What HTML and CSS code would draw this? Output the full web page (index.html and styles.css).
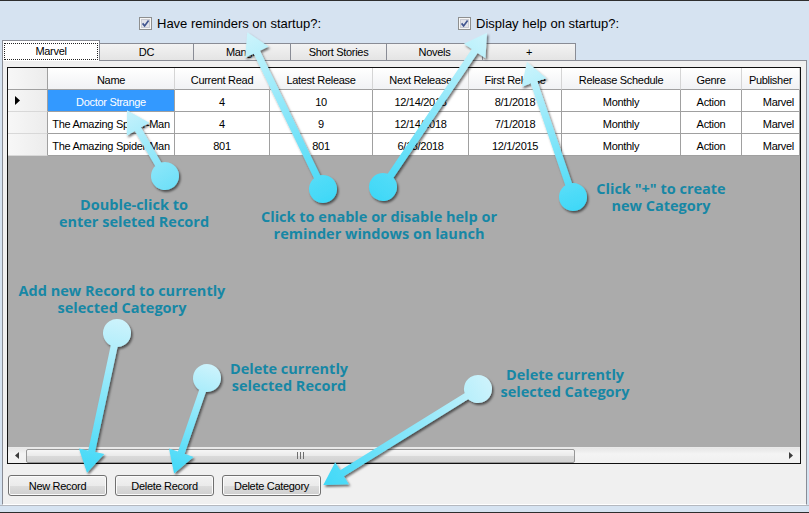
FILE: index.html
```html
<!DOCTYPE html>
<html>
<head>
<meta charset="utf-8">
<link rel="stylesheet" href="styles.css">
</head>
<body>
<div class="window">
  <div class="options">
    <label class="opt">
      <svg class="cb" width="13" height="13" viewBox="0 0 13 13"><rect x="0.5" y="0.5" width="12" height="12" fill="#f6f6f6" stroke="#8e8f8f"/><rect x="2.5" y="2.5" width="8" height="8" fill="#e2e3ea" stroke="#c9cbd3"/><path d="M3.6 6.4 L5.6 8.9 L9.6 3.6" fill="none" stroke="#41558f" stroke-width="1.7"/></svg>
      <span>Have reminders on startup?:</span>
    </label>
    <label class="opt">
      <svg class="cb" width="13" height="13" viewBox="0 0 13 13"><rect x="0.5" y="0.5" width="12" height="12" fill="#f6f6f6" stroke="#8e8f8f"/><rect x="2.5" y="2.5" width="8" height="8" fill="#e2e3ea" stroke="#c9cbd3"/><path d="M3.6 6.4 L5.6 8.9 L9.6 3.6" fill="none" stroke="#41558f" stroke-width="1.7"/></svg>
      <span>Display help on startup?:</span>
    </label>
  </div>
  <div class="tabs">
    <div class="tab sel t-marvel"><span class="focus">Marvel</span></div>
    <div class="tab t-dc">DC</div>
    <div class="tab t-manga">Manga</div>
    <div class="tab t-ss">Short Stories</div>
    <div class="tab t-novels">Novels</div>
    <div class="tab t-plus">+</div>
  </div>
  <div class="panel">
    <div class="grid">
      <div class="row head">
        <div class="c rh"></div>
        <div class="c">Name</div>
        <div class="c">Current Read</div>
        <div class="c">Latest Release</div>
        <div class="c">Next Release</div>
        <div class="c">First Release</div>
        <div class="c">Release Schedule</div>
        <div class="c">Genre</div>
        <div class="c">Publisher</div>
      </div>
      <div class="row">
        <div class="c rh"><svg class="cur" width="5" height="9" viewBox="0 0 5 9"><path d="M0 0 L5 4.5 L0 9 Z" fill="#000"/></svg></div>
        <div class="c selcell">Doctor Strange</div>
        <div class="c">4</div>
        <div class="c">10</div>
        <div class="c">12/14/2018</div>
        <div class="c">8/1/2018</div>
        <div class="c">Monthly</div>
        <div class="c">Action</div>
        <div class="c pub">Marvel</div>
      </div>
      <div class="row">
        <div class="c rh"></div>
        <div class="c">The Amazing Spider-Man</div>
        <div class="c">4</div>
        <div class="c">9</div>
        <div class="c">12/14/2018</div>
        <div class="c">7/1/2018</div>
        <div class="c">Monthly</div>
        <div class="c">Action</div>
        <div class="c pub">Marvel</div>
      </div>
      <div class="row">
        <div class="c rh"></div>
        <div class="c">The Amazing Spider-Man</div>
        <div class="c">801</div>
        <div class="c">801</div>
        <div class="c">6/13/2018</div>
        <div class="c">12/1/2015</div>
        <div class="c">Monthly</div>
        <div class="c">Action</div>
        <div class="c pub">Marvel</div>
      </div>
      <div class="empty"></div>
      <div class="hscroll">
        <div class="sb-btn"><svg width="4" height="7" viewBox="0 0 4 7"><path d="M4 0 L0 3.5 L4 7 Z" fill="#3c3c3c"/></svg></div>
        <div class="sb-track">
          <div class="thumb"><svg width="7" height="7" viewBox="0 0 7 7"><path d="M0.5 0 V7 M3.5 0 V7 M6.5 0 V7" stroke="#6f6f6f" stroke-width="1"/></svg></div>
        </div>
        <div class="sb-btn"><svg width="4" height="7" viewBox="0 0 4 7"><path d="M0 0 L4 3.5 L0 7 Z" fill="#3c3c3c"/></svg></div>
      </div>
    </div>
    <div class="buttons">
      <div class="btn">New Record</div>
      <div class="btn">Delete Record</div>
      <div class="btn">Delete Category</div>
    </div>
  </div>
  <div class="sepline"></div>
  <div class="bottomstrip"></div>
</div>

<div class="note n1">Double-click to<br>enter seleted Record</div>
<div class="note n2">Click to enable or disable help or<br>reminder windows on launch</div>
<div class="note n3">Click "+" to create<br>new Category</div>
<div class="note n4">Add new Record to currently<br>selected Category</div>
<div class="note n5">Delete currently<br>selected Record</div>
<div class="note n6">Delete currently<br>selected Category</div>

<svg class="overlay" width="809" height="513" viewBox="0 0 809 513">
  <defs>
    <linearGradient id="gUp" x1="0" y1="0" x2="1" y2="0">
      <stop offset="0" stop-color="#3fd8f7"/>
      <stop offset="1" stop-color="#cdf4fc"/>
    </linearGradient>
    <linearGradient id="gDown" x1="0" y1="0" x2="1" y2="0">
      <stop offset="0" stop-color="#cdf3fc"/>
      <stop offset="1" stop-color="#3fd8f7"/>
    </linearGradient>
    <linearGradient id="gA" x1="0" y1="0" x2="1" y2="0">
      <stop offset="0" stop-color="#6fe0f8"/>
      <stop offset="1" stop-color="#c6f2fc"/>
    </linearGradient>
    <filter id="sh" x="-20%" y="-20%" width="140%" height="140%">
      <feDropShadow dx="1.5" dy="2" stdDeviation="1.3" flood-color="#000" flood-opacity="0.55"/>
    </filter>
  </defs>
  <g filter="url(#sh)"><path transform="translate(165 176) rotate(-120)" fill="url(#gA)" d="M0 -14 A14 14 0 1 1 0 14 A14 14 0 1 1 0 -14 Z M0 -3.5 H54 V-13 L76 0 L54 13 V3.5 H0 Z"/></g>
  <g filter="url(#sh)"><path transform="translate(323 189) rotate(-115.8)" fill="url(#gUp)" d="M0 -14 A14 14 0 1 1 0 14 A14 14 0 1 1 0 -14 Z M0 -3.5 H152 V-13 L174 0 L152 13 V3.5 H0 Z"/></g>
  <g filter="url(#sh)"><path transform="translate(383 187) rotate(-56)" fill="url(#gUp)" d="M0 -14 A14 14 0 1 1 0 14 A14 14 0 1 1 0 -14 Z M0 -3.5 H164 V-13 L186 0 L164 13 V3.5 H0 Z"/></g>
  <g filter="url(#sh)"><path transform="translate(573 197) rotate(-108.8)" fill="url(#gUp)" d="M0 -14 A14 14 0 1 1 0 14 A14 14 0 1 1 0 -14 Z M0 -3.5 H121 V-13 L143 0 L121 13 V3.5 H0 Z"/></g>
  <g filter="url(#sh)"><path transform="translate(117 333) rotate(102.1)" fill="url(#gDown)" d="M0 -14 A14 14 0 1 1 0 14 A14 14 0 1 1 0 -14 Z M0 -3.5 H121 V-13 L143 0 L121 13 V3.5 H0 Z"/></g>
  <g filter="url(#sh)"><path transform="translate(207 378) rotate(109)" fill="url(#gDown)" d="M0 -14 A14 14 0 1 1 0 14 A14 14 0 1 1 0 -14 Z M0 -3.5 H79 V-13 L101 0 L79 13 V3.5 H0 Z"/></g>
  <g filter="url(#sh)"><path transform="translate(478 389) rotate(148.2)" fill="url(#gDown)" d="M0 -14 A14 14 0 1 1 0 14 A14 14 0 1 1 0 -14 Z M0 -3.5 H160 V-13 L182 0 L160 13 V3.5 H0 Z"/></g>
</svg>
</body>
</html>
```
FILE: styles.css
```css
* { box-sizing: border-box; }
html, body { margin: 0; padding: 0; }
body {
  width: 809px;
  height: 513px;
  overflow: hidden;
  position: relative;
  background: #d6e3f1;
  font-family: "Liberation Sans", Arial, sans-serif;
  color: #000;
}
.window {
  display: flex;
  flex-direction: column;
  height: 513px;
  border-top: 1px solid #2e2e2e;
  border-bottom: 1px solid #2e2e2e;
}
.options {
  height: 39px;
  display: flex;
  padding: 16px 0 0 139px;
  font-size: 13px;
}
.opt {
  display: flex;
  align-items: center;
  height: 13px;
  width: 319px;
  white-space: nowrap;
}
.cb { flex: none; margin-right: 5px; }

.tabs {
  height: 20px;
  display: flex;
  align-items: flex-end;
  padding-left: 2px;
  font-size: 11px;
  letter-spacing: -0.3px;
}
.tab {
  height: 17px;
  margin-left: -1px;
  border: 1px solid #898c95;
  border-bottom: none;
  background: linear-gradient(#f3f3f3, #e4e4e4);
  text-align: center;
  line-height: 17px;
  white-space: nowrap;
}
.tab.sel {
  position: relative;
  z-index: 2;
  margin-left: 0;
  height: 21px;
  margin-bottom: -1px;
  background: #fff;
  padding: 2px 1px 1px 1px;
  line-height: 15px;
}
.focus {
  display: block;
  height: 17px;
  border: 1px dotted #222;
}
.t-marvel { width: 98px; }
.t-dc { width: 95px; }
.t-manga { width: 98px; }
.t-ss { width: 97px; }
.t-novels { width: 97px; }
.t-plus { width: 94px; }

.panel {
  height: 445px;
  width: 805px;
  margin-left: 2px;
  border: 1px solid #898c95;
  border-bottom: 1px solid #ffffff;
  background: #f0f0f0;
  padding: 6px 5px 0 4px;
  font-size: 11px;
  letter-spacing: -0.3px;
}
.grid {
  height: 397px;
  width: 794px;
  border: 1px solid #101010;
  display: flex;
  flex-direction: column;
  background: #ababab;
}
.row {
  display: grid;
  grid-template-columns: 40px 127px 95px 103px 96px 93px 119px 61px 58px;
  height: 22px;
  flex: none;
}
.c {
  height: 22px;
  border-right: 1px solid #a0a0a0;
  border-bottom: 1px solid #a0a0a0;
  background: #fff;
  text-align: center;
  padding-top: 2px;
  line-height: 20px;
  white-space: nowrap;
  overflow: hidden;
}
.head .c {
  background: linear-gradient(#ffffff, #f1f2f4);
  border-right: 1px solid #d5d5d5;
  border-bottom: 1px solid #a0a0a0;
}
.c.rh {
  background: linear-gradient(90deg, #f7f7f7, #ececec);
  border-right: 1px solid #a0a0a0;
  border-bottom: 1px solid #d8d8d8;
  text-align: left;
  padding-top: 0;
  padding-left: 7px;
  display: flex;
  align-items: center;
}
.head .c.rh { border-right: 1px solid #a0a0a0; border-bottom: 1px solid #a0a0a0; }
.selcell { background: #3399ff; color: #fff; }
.c.pub { text-align: right; padding-right: 5px; }
.empty { flex: 1; }
.hscroll {
  height: 16px;
  flex: none;
  display: flex;
  background: linear-gradient(#e6e6e6, #f4f4f4 40%, #f0f0f0);
  border-top: 1px solid #e9e9e9;
}
.sb-btn {
  width: 18px;
  flex: none;
  display: flex;
  align-items: center;
  justify-content: center;
}
.sb-track { flex: 1; display: flex; align-items: center; }
.thumb {
  width: 549px;
  height: 14px;
  border: 1px solid #979797;
  border-radius: 2px;
  background: linear-gradient(#f6f6f6, #eaeaea 50%, #dadada 51%, #d2d2d2);
  display: flex;
  align-items: center;
  justify-content: center;
}
.buttons {
  display: flex;
  gap: 8px;
  margin-top: 11px;
  padding-left: 1px;
}
.btn {
  width: 99px;
  height: 21px;
  border: 1px solid #707070;
  border-radius: 3px;
  background: linear-gradient(#f2f2f2, #ebebeb 50%, #dddddd 51%, #cfcfcf);
  box-shadow: inset 0 0 0 1px #fbfbfb;
  text-align: center;
  line-height: 20px;
  white-space: nowrap;
}
.sepline { height: 1px; background: #b4b8bf; }
.bottomstrip { height: 6px; background: #d6e3f1; }

.note {
  position: absolute;
  width: 260px;
  font-family: "Open Sans", "DejaVu Sans", sans-serif;
  font-weight: 700;
  font-size: 14.5px;
  line-height: 17px;
  color: #1787a5;
  text-align: center;
  white-space: nowrap;
}
.n1 { left: 4px; top: 196px; }
.n2 { left: 249px; top: 208px; }
.n3 { left: 531px; top: 180px; }
.n4 { left: -8px; top: 282px; }
.n5 { left: 159px; top: 360px; }
.n6 { left: 435px; top: 366px; }
.overlay {
  position: absolute;
  left: 0;
  top: 0;
  pointer-events: none;
}
```
